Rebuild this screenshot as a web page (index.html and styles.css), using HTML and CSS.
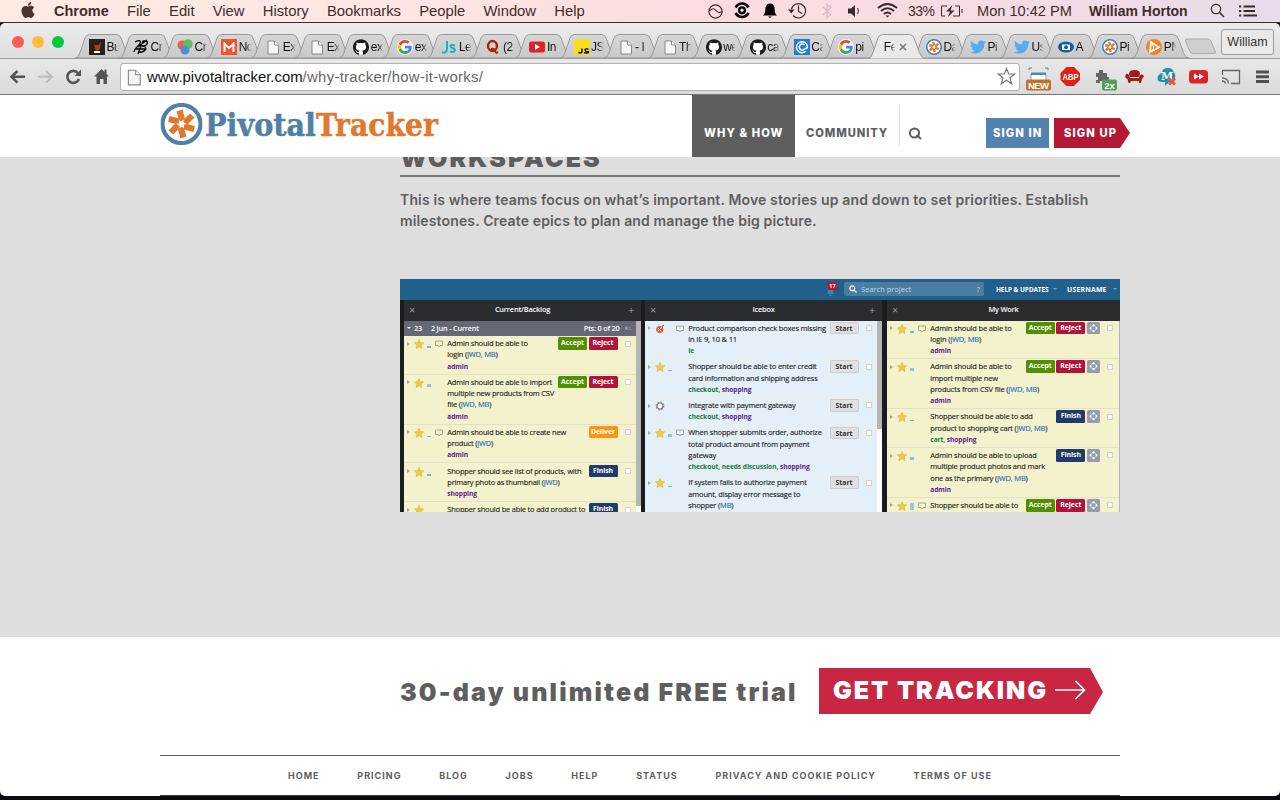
FILE: index.html
```html
<!DOCTYPE html>
<html lang="en">
<head>
<meta charset="utf-8">
<title>How It Works</title>
<link rel="stylesheet" href="styles.css">
</head>
<body>
<svg class="defs" width="0" height="0">
  <defs>
    <linearGradient id="tabfill" x1="0" y1="0" x2="0" y2="1"><stop offset="0" stop-color="#d6d6d6"/><stop offset="1" stop-color="#c9c9c9"/></linearGradient>
    <symbol id="tab" viewBox="0 0 57 25"><path d="M0 24C3 24 3.6 22 5 18.500L10 4Q11.500.5 14.500.5H41.500Q44.500.5 46 4L51.500 18.500C53 22 54 24 57 24Z" fill="url(#tabfill)" stroke="#999"/></symbol>
    <symbol id="tab-on" viewBox="0 0 57 25"><path d="M0 25C3 24 3.600 22 5 18.500L10 4Q11.500.5 14.500.5H41.500Q44.500.5 46 4L51.500 18.500C53 22 54 24 57 25Z" fill="#e9e9e9" stroke="#999"/></symbol>
    <symbol id="page" viewBox="0 0 16 16"><path d="M3 2h6.500l4 4v9H3z" fill="#f7f7f7" stroke="#888"/><path d="M9.500 2v4h4" fill="#fff" stroke="#888"/></symbol>
    <symbol id="github" viewBox="0 0 24 24"><circle cx="12" cy="12" r="11" fill="#fff"/><path fill="#1a1a1a" d="M12 .297c-6.630 0-12 5.373-12 12 0 5.303 3.438 9.800 8.205 11.385.6.113.82-.258.82-.577 0-.285-.01-1.040-.015-2.040-3.338.724-4.042-1.610-4.042-1.610C4.422 18.070 3.633 17.700 3.633 17.700c-1.087-.744.084-.729.084-.729 1.205.084 1.838 1.236 1.838 1.236 1.070 1.835 2.809 1.305 3.495.998.108-.776.417-1.305.76-1.605-2.665-.3-5.466-1.332-5.466-5.930 0-1.310.465-2.380 1.235-3.220-.135-.303-.54-1.523.105-3.176 0 0 1.005-.322 3.300 1.230.96-.267 1.980-.399 3-.405 1.020.006 2.040.138 3 .405 2.280-1.552 3.285-1.230 3.285-1.230.645 1.653.24 2.873.12 3.176.765.840 1.230 1.910 1.230 3.220 0 4.610-2.805 5.625-5.475 5.920.42.36.81 1.096.81 2.220 0 1.606-.015 2.896-.015 3.286 0 .315.21.69.825.57C20.565 22.092 24 17.592 24 12.297c0-6.627-5.373-12-12-12"/></symbol>
    <symbol id="twitter" viewBox="0 0 24 24"><path fill="#55acee" d="M23.954 4.569c-.885.389-1.830.654-2.825.775 1.014-.611 1.794-1.574 2.163-2.723-.951.555-2.005.959-3.127 1.184-.896-.959-2.173-1.559-3.591-1.559-2.717 0-4.920 2.203-4.920 4.917 0 .39.045.765.127 1.124C7.691 8.094 4.066 6.130 1.640 3.161c-.427.722-.666 1.561-.666 2.475 0 1.710.87 3.213 2.188 4.096-.807-.026-1.566-.248-2.228-.616v.061c0 2.385 1.693 4.374 3.946 4.827-.413.111-.849.171-1.296.171-.314 0-.615-.03-.916-.086.631 1.953 2.445 3.377 4.604 3.417-1.680 1.319-3.809 2.105-6.102 2.105-.39 0-.779-.023-1.170-.067 2.189 1.394 4.768 2.209 7.557 2.209 9.054 0 13.999-7.496 13.999-13.986 0-.209 0-.42-.015-.63.961-.689 1.800-1.560 2.460-2.548z"/></symbol>
    <symbol id="google" viewBox="0 0 48 48"><circle cx="24" cy="24" r="24" fill="#fff"/><g transform="translate(3 3) scale(.875)"><path fill="#EA4335" d="M24 9.500c3.540 0 6.710 1.220 9.210 3.600l6.850-6.850C35.900 2.380 30.470 0 24 0 14.620 0 6.510 5.380 2.560 13.220l7.980 6.190C12.430 13.720 17.740 9.500 24 9.500z"/><path fill="#4285F4" d="M46.980 24.550c0-1.570-.15-3.090-.38-4.550H24v9.020h12.940c-.58 2.960-2.260 5.480-4.780 7.180l7.730 6c4.510-4.180 7.090-10.360 7.090-17.650z"/><path fill="#FBBC05" d="M10.530 28.590c-.48-1.450-.76-2.990-.76-4.590s.27-3.140.76-4.590l-7.980-6.190C.92 16.460 0 20.120 0 24s.92 7.540 2.560 10.780z"/><path fill="#34A853" d="M24 48c6.480 0 11.930-2.130 15.890-5.810l-7.730-6c-2.150 1.450-4.920 2.300-8.160 2.300-6.260 0-11.570-4.220-13.470-9.910l-7.980 6.190C6.510 42.620 14.620 48 24 48z"/></g></symbol>
    <symbol id="pivotal" viewBox="-21 -21 42 42"><circle r="19" fill="#fff" stroke="#5280a5" stroke-width="4.200"/><g fill="#e0782d"><g id="pp"><path d="M-5-12.500L1-14.500 3.600-5-.8-2.500-2.800-5Z"/></g><use href="#pp" transform="rotate(60)"/><use href="#pp" transform="rotate(120)"/><use href="#pp" transform="rotate(180)"/><use href="#pp" transform="rotate(240)"/><use href="#pp" transform="rotate(300)"/></g></symbol>
    <symbol id="star" viewBox="0 0 10 10"><path d="M5 .4L6.350 3.600 9.700 3.900 7.150 6.100 7.950 9.500 5 7.700 2.050 9.500 2.850 6.100.3 3.900 3.650 3.600Z" fill="#f3cc3a" stroke="#cba63a" stroke-width=".5"/></symbol>
    <symbol id="bubble" viewBox="0 0 8 8"><path d="M.5 1h7v4.500H5L4 7 3 5.500H.5z" fill="none" stroke="#98987f" stroke-width=".8"/></symbol>
    <symbol id="cross" viewBox="0 0 13 13"><path d="M6.500 2L8.700 4.300H4.300zM6.500 11L8.700 8.700H4.300zM2 6.500L4.300 4.300V8.700zM11 6.500L8.700 4.300V8.700z" fill="#fff"/></symbol>
  </defs>
</svg>

<header class="menubar">
  <svg class="apple" width="14" height="16" viewBox="2 0 20 24"><path fill="#4a342d" d="M12.152 6.896c-.948 0-2.415-1.078-3.960-1.040-2.040.027-3.910 1.183-4.961 3.014-2.117 3.675-.546 9.103 1.519 12.090 1.013 1.454 2.208 3.090 3.792 3.039 1.520-.065 2.090-.987 3.935-.987 1.831 0 2.350.987 3.960.948 1.637-.026 2.676-1.480 3.676-2.948 1.156-1.688 1.636-3.325 1.662-3.415-.039-.013-3.182-1.221-3.220-4.857-.026-3.040 2.480-4.494 2.597-4.559-1.429-2.090-3.623-2.324-4.390-2.376-2-.156-3.675 1.090-4.610 1.090zM15.530 3.830c.843-1.012 1.400-2.427 1.245-3.830-1.207.052-2.662.805-3.532 1.818-.78.896-1.454 2.338-1.273 3.714 1.338.104 2.715-.688 3.559-1.701"/></svg>
  <nav class="menus"><b>Chrome</b><span>File</span><span>Edit</span><span>View</span><span>History</span><span>Bookmarks</span><span>People</span><span>Window</span><span>Help</span></nav>
  <svg class="extras" width="200" height="22" viewBox="700 0 200 22" fill="none" stroke="#3c2a2e" stroke-width="1.200">
    <circle cx="715.500" cy="11.500" r="6.600"/><path d="M709.500 11C712 7.500 714.500 8.500 716.500 11S720.500 12.500 722 11.500"/>
    <g stroke="#000" stroke-width="2.600"><path d="M735.500 7.500Q738 3.500 742 3.500T748.500 7.500M735.500 13Q738 17 742 17T748.500 13"/><circle cx="742" cy="10.300" r="2.900" stroke-width="2.400"/></g>
    <path d="M763 15.500C766 13 765 10 765.500 7.500Q766.500 3.500 770 3.500T774.500 7.500C775 10 774 13 777 15.500ZM768 16.500h4l-2 1.500z" fill="#000" stroke="none"/>
    <path d="M791.500 9A7.200 7.200 0 1 1 793 15.500M798.500 5.500V11.500L802 13.500"/><path d="M788 9.500h6.500l-3.200 4z" fill="#3c2a2e" stroke="none"/>
    <path d="M823 7L831 14.500 827 18V4L831 7.500 823 15" stroke="#d8bcc4"/>
    <path d="M848 8.500h3l4-3.500v12l-4-3.500h-3z" fill="#3c2a2e" stroke="none"/><path d="M857.500 8Q859.500 11 857.500 14" stroke-width="1"/>
    <path d="M878 8Q887.500 0 897 8M881 11Q887.500 5.500 894 11M884 14Q887.500 11 891 14" stroke-width="2"/><path d="M885.500 15.500h4l-2 2z" fill="#3c2a2e" stroke="none"/>
  </svg>
  <span class="pct">33%</span>
  <svg class="batt" width="24" height="14" viewBox="0 0 24 14" fill="none" stroke="#3c2a2e"><path d="M7 2H1.500V12H5M15 2H19.500V12H13"/><path d="M12.500 1L6 7.500H10L8 13 14.500 6.500H10.500Z" fill="#3c2a2e" stroke="none"/><path d="M22 5v4"/></svg>
  <span class="clock">Mon 10:42 PM</span>
  <b class="user">William Horton</b>
  <svg class="spot" width="15" height="15" viewBox="0 0 15 15" fill="none" stroke="#3c2a2e" stroke-width="1.200"><circle cx="6" cy="6" r="4.700"/><path d="M9.500 9.500L14 14" stroke-width="1.600"/></svg>
  <svg class="list" width="19" height="12" viewBox="0 0 19 12" stroke="#3c2a2e" stroke-width="1.800"><path d="M0 1.500h2.200M4.500 1.500H16M0 6h2.200M4.500 6H16M0 10.500h2.200M4.500 10.500H18"/></svg>
</header>

<div class="strip">
  <i class="light red"></i><i class="light amber"></i><i class="light green"></i>
  <div class="tabs">
    <div class="tab"><svg class="shape"><use href="#tab"/></svg><svg class="fav" viewBox="0 0 16 16"><path fill="#26211f" d="M0 0h16v16H0z"/><path d="M5 3l1 3h4l2-4-1 8-3 2-2-2z" fill="#a3421c"/><path d="M5 12h6v2H5z" fill="#fff"/></svg><span>Bu</span></div>
    <div class="tab"><svg class="shape"><use href="#tab"/></svg><svg class="fav" viewBox="0 0 16 16" fill="none" stroke="#000" stroke-width="1.300"><path d="M2 3C8 0 9 3 5 7S1 12 1 13M5 8L14 1M5 15L10 2C17 1 15 7 9 7 16 7 13 14 5 13M3 10H12"/></svg><span>Cr</span></div>
    <div class="tab"><svg class="shape"><use href="#tab"/></svg><svg class="fav" viewBox="0 0 16 16"><circle cx="5" cy="6" r="4.500" fill="#e5623f"/><circle cx="11" cy="5" r="4.800" fill="#64bd5b"/><circle cx="8" cy="11" r="4.500" fill="#4d8fdc"/></svg><span>Cr</span></div>
    <div class="tab"><svg class="shape"><use href="#tab"/></svg><svg class="fav" viewBox="0 0 16 16"><path fill="#f0542d" d="M0 0h16v16H0z"/><path d="M3.500 13V5L8 9l4.500-4v8" fill="none" stroke="#fff" stroke-width="2"/><path d="M3 3l2 2M13 3l-2 2" stroke="#fff"/></svg><span>No</span></div>
    <div class="tab"><svg class="shape"><use href="#tab"/></svg><svg class="fav"><use href="#page"/></svg><span>Ex</span></div>
    <div class="tab"><svg class="shape"><use href="#tab"/></svg><svg class="fav"><use href="#page"/></svg><span>Ex</span></div>
    <div class="tab"><svg class="shape"><use href="#tab"/></svg><svg class="fav"><use href="#github"/></svg><span>ex</span></div>
    <div class="tab"><svg class="shape"><use href="#tab"/></svg><svg class="fav"><use href="#google"/></svg><span>ex</span></div>
    <div class="tab"><svg class="shape"><use href="#tab"/></svg><svg class="fav" viewBox="0 0 16 16" fill="none" stroke="#12b5cb" stroke-width="2"><path d="M6 2V10Q6 14 1 13.500M14 6.500Q9 5 9.500 7.500C10 9.500 14 8.500 14 11.500Q13 14 9 12.500"/></svg><span>Le</span></div>
    <div class="tab"><svg class="shape"><use href="#tab"/></svg><svg class="fav" viewBox="0 0 16 16" fill="none" stroke="#a82400"><ellipse cx="7.500" cy="7" rx="4.500" ry="5" stroke-width="2.400"/><path d="M6 10Q9 9 10 12T13 13" stroke-width="2"/></svg><span>(2</span></div>
    <div class="tab"><svg class="shape"><use href="#tab"/></svg><svg class="fav" viewBox="0 0 16 16"><rect y="2.500" width="16" height="11" rx="2.500" fill="#d8242a"/><path d="M6 5l5 3-5 3z" fill="#fff"/></svg><span>In</span></div>
    <div class="tab"><svg class="shape"><use href="#tab"/></svg><svg class="fav" viewBox="0 0 16 16"><path fill="#f7df1e" d="M0 0h16v16H0z"/><path d="M8 9.500V13Q7.500 14.500 4.500 13.500M14.500 10.200Q10.800 9.200 11 11T14.500 12.800Q14 14.800 10 13.700" fill="none" stroke="#000" stroke-width="1.400"/></svg><span>JS</span></div>
    <div class="tab"><svg class="shape"><use href="#tab"/></svg><svg class="fav"><use href="#page"/></svg><span>- I</span></div>
    <div class="tab"><svg class="shape"><use href="#tab"/></svg><svg class="fav"><use href="#page"/></svg><span>Th</span></div>
    <div class="tab"><svg class="shape"><use href="#tab"/></svg><svg class="fav"><use href="#github"/></svg><span>we</span></div>
    <div class="tab"><svg class="shape"><use href="#tab"/></svg><svg class="fav"><use href="#github"/></svg><span>ca</span></div>
    <div class="tab"><svg class="shape"><use href="#tab"/></svg><svg class="fav" viewBox="0 0 16 16" fill="none" stroke="#fff"><path fill="#1b7fd6" stroke="none" d="M0 0h16v16H0z"/><path d="M12 12A5.500 5.500 0 1 1 13.500 8Q13 10 10.500 9.500M10.500 6A3 3 0 1 0 10.500 10" stroke-width="1.500"/></svg><span>Ca</span></div>
    <div class="tab"><svg class="shape"><use href="#tab"/></svg><svg class="fav"><use href="#google"/></svg><span>pi</span></div>
    <div class="tab on"><svg class="shape"><use href="#tab-on"/></svg><span>Fe</span><svg class="close" width="8" height="8" viewBox="0 0 8 8"><path d="M1 1l6 6M7 1L1 7" stroke="#777" stroke-width="1.500"/></svg></div>
    <div class="tab"><svg class="shape"><use href="#tab"/></svg><svg class="fav"><use href="#pivotal"/></svg><span>Da</span></div>
    <div class="tab"><svg class="shape"><use href="#tab"/></svg><svg class="fav"><use href="#twitter"/></svg><span>Pi</span></div>
    <div class="tab"><svg class="shape"><use href="#tab"/></svg><svg class="fav"><use href="#twitter"/></svg><span>Us</span></div>
    <div class="tab"><svg class="shape"><use href="#tab"/></svg><svg class="fav" viewBox="0 0 16 16"><ellipse cx="8" cy="8" rx="8" ry="5.500" fill="#155f9e"/><path d="M4 5.500h8v5.500H4z" fill="#fff"/><circle cx="8" cy="8.200" r="2" fill="#155f9e"/></svg><span>A</span></div>
    <div class="tab"><svg class="shape"><use href="#tab"/></svg><svg class="fav"><use href="#pivotal"/></svg><span>Pi</span></div>
    <div class="tab"><svg class="shape"><use href="#tab"/></svg><svg class="fav" viewBox="0 0 16 16"><circle cx="8" cy="8" r="8" fill="#f58220"/><path d="M5 3L13 8.500 4 13Z" fill="none" stroke="#fff" stroke-width="1.800"/><path d="M5 3L8 9L4 13" fill="none" stroke="#fff"/></svg><span>PN</span></div>
  </div>
  <svg class="newtab" width="34" height="17" viewBox="0 0 34 17"><path d="M3 1H24Q26 1 27 3L31.500 14Q32 15.500 30 15.500H9Q7 15.500 6 13.500L1.500 3Q1 1 3 1Z" fill="#d0d0d0" stroke="#aaa"/></svg>
  <button class="profile">William</button>
</div>

<div class="toolbar">
  <svg class="nav" width="104" height="20" viewBox="8 67 104 20" fill="none" stroke="#555" stroke-width="2.600">
    <path d="M25 76.800H12M17.500 71L11.500 76.800 17.500 82.600"/><path d="M38 76.800H51M46 71L52 76.800 46 82.600" stroke="#bdbdbd" stroke-width="2"/>
    <path d="M78 73A6 6 0 1 0 79 79"/><path d="M81 69.500V76H74.500z" fill="#555" stroke="none"/>
    <path d="M101.500 69L94 76.500H96.500V84H100V79H103.500V84H107V76.500H109L106.500 74V69.500H104.500V72z" fill="#555" stroke="none"/>
  </svg>
  <div class="omni">
    <svg width="18" height="18" viewBox="0 0 16 16"><use href="#page"/></svg>
    <span class="url">www.pivotaltracker.com<em>/why-tracker/how-it-works/</em></span>
    <svg class="fave" width="19" height="19" viewBox="0 0 19 19"><path d="M9.500 1.500L11.700 7H17.700L13 10.700 14.700 16.800 9.500 13.300 4.300 16.800 6 10.700 1.300 7H7.300Z" fill="#fff" stroke="#777" stroke-width="1.200"/></svg>
  </div>
  <svg class="exts" width="250" height="30" viewBox="1024 64 250 30">
    <path d="M1031 74h15v8h-15z" fill="#fff" stroke="#8aa7bd"/><path d="M1031 72.500h15v2.500h-15z" fill="#4d8ab8"/><path d="M1029 70v-2h3M1045 68h3v2" fill="none" stroke="#4d8ab8"/>
    <rect x="1026" y="79.500" width="25" height="11" rx="2" fill="#c0712b"/><text x="1038.500" y="88.700" class="ext-txt" font-size="9.500" textLength="21">NEW</text>
    <path d="M1066.500 67h7.500l6 6v7l-6 6h-7.500l-6-6v-7z" fill="#e01f16"/><text x="1070.500" y="80.300" class="ext-txt" font-size="9.500" textLength="16" lengthAdjust="spacingAndGlyphs">ABP</text>
    <path d="M1096 73h3v-3h4v3h4v4h2v3h-2v3h-4v-2h-3v2h-4v-3h2v-3h-2z" fill="#666"/><rect x="1102" y="79.500" width="15" height="11" rx="2" fill="#4f9f55"/><text x="1109.500" y="88.700" class="ext-txt" font-size="9.500">2x</text>
    <path d="M1129 74Q1129 70 1134.500 70T1140 74L1139 77H1130zM1126 74Q1129 73 1130 78H1139Q1140 73 1143.500 75 1144.500 77 1142 79L1141 83H1139V81H1130.500V83H1128.500L1127.500 79Q1124 78 1126 74Z" fill="#a01c16"/>
    <path d="M1161 82Q1156 81 1158 76 1160 73 1162 73 1162 68 1168 68 1173 68 1173.500 72 1176 74 1175 78 1174 82 1169 82L1165 86V82Z" fill="#2391ac"/><text x="1167" y="80" class="ext-txt" font-size="11" font-family="DejaVu Serif">M</text><path d="M1169 78.500l6 6M1175 78.500l-6 6" stroke="#f04e3e" stroke-width="2.500"/>
    <rect x="1189" y="70" width="19" height="13.500" rx="3.500" fill="#d92325"/><path d="M1194 73.500l5 3-5 3zM1199 73.500l5 3-5 3z" fill="#fff"/>
    <path d="M1222.500 75V70.500H1239.500V83.500H1231M1222 78Q1228 78 1228.500 83.500M1222 81Q1225 81 1225.500 83.500" fill="none" stroke="#666" stroke-width="1.300"/>
    <path d="M1256 72H1269M1256 76.800H1269M1256 81.500H1269" stroke="#505050" stroke-width="3"/>
  </svg>
</div>

<div class="site">
  <div class="topnav">
    <svg class="logo" width="280" height="46" viewBox="160 101 280 46">
      <use href="#pivotal" x="160.500" y="103" width="42" height="42"/>
      <text x="205" y="135.500" class="wordmark blue" textLength="111" lengthAdjust="spacingAndGlyphs">Pivotal</text>
      <text x="316" y="135.500" class="wordmark orange" textLength="122" lengthAdjust="spacingAndGlyphs">Tracker</text>
    </svg>
    <nav class="links">
      <a class="why">WHY &amp; HOW</a><a class="community">COMMUNITY</a>
      <span class="search"><svg width="14" height="14" viewBox="0 0 14 14" fill="none" stroke="#5e5e5e" stroke-width="2"><circle cx="5.500" cy="6" r="4.600"/><path d="M7.500 8L12 12"/></svg></span>
    </nav>
    <a class="signin">SIGN IN</a><a class="signup">SIGN UP</a>
  </div>

  <section class="workspaces">
    <h2>WORKSPACES</h2>
    <p>This is where teams focus on what’s important. Move stories up and down to set priorities. Establish<br>milestones. Create epics to plan and manage the big picture.</p>
    <div class="app">
      <div class="appbar">
        <span class="bell"><svg width="9" height="9" viewBox="0 0 9 9"><path d="M1 7Q2 6 2 4 2 1 4.500 1T7 4Q7 6 8 7ZM3.500 7.500h2V9h-2z" fill="#4384b1"/></svg><b>17</b></span>
        <span class="find"><svg width="8" height="8" viewBox="0 0 8 8" fill="none" stroke="#fff" stroke-width="1.300"><circle cx="3.300" cy="3.300" r="2.400"/><path d="M5 5l2.500 2.500"/></svg>Search project<i>?</i></span>
        <b class="help">HELP &amp; UPDATES</b><i class="caret"></i><b class="uname">USERNAME</b><i class="caret"></i>
      </div>
      <div class="panels">
        <div class="panel first">
          <div class="phead"><i>×</i><b>Current/Backlog</b><i class="plus">+</i></div>
          <div class="iter"><i class="down"></i><span>23</span><span class="date">2 Jun - Current</span><span class="pts">Pts: 0 of 20</span><i class="tri">▾≡</i></div>
          <div class="body yellow">
            <div class="story"><div class="ic"><i class="arr"></i><svg class="st"><use href="#star"/></svg><i class="est two"></i><svg class="bub"><use href="#bubble"/></svg></div><div class="txt">Admin should be able to<br>login (<a>JWD, MB</a>)<br><b>admin</b></div><div class="act"><b class="accept">Accept</b><b class="reject">Reject</b><i class="box"></i></div></div>
            <div class="story"><div class="ic"><i class="arr"></i><svg class="st"><use href="#star"/></svg><i class="est three"></i></div><div class="txt">Admin should be able to import<br>multiple new products from CSV<br>file (<a>JWD, MB</a>)<br><b>admin</b></div><div class="act"><b class="accept">Accept</b><b class="reject">Reject</b><i class="box"></i></div></div>
            <div class="story"><div class="ic"><i class="arr"></i><svg class="st"><use href="#star"/></svg><i class="est one"></i><svg class="bub"><use href="#bubble"/></svg></div><div class="txt">Admin should be able to create new<br>product (<a>JWD</a>)<br><b>admin</b></div><div class="act"><b class="deliver">Deliver</b><i class="box"></i></div></div>
            <div class="story"><div class="ic"><i class="arr"></i><svg class="st"><use href="#star"/></svg><i class="est two"></i></div><div class="txt">Shopper should see list of products, with<br>primary photo as thumbnail (<a>JWD</a>)<br><b>shopping</b></div><div class="act"><b class="finish">Finish</b><i class="box"></i></div></div>
            <div class="story"><div class="ic"><i class="arr"></i><svg class="st"><use href="#star"/></svg></div><div class="txt">Shopper should be able to add product to</div><div class="act"><b class="finish">Finish</b><i class="box"></i></div></div>
          </div>
          <i class="bar b1"></i>
        </div>
        <div class="panel second">
          <div class="phead"><i>×</i><b>Icebox</b><i class="plus">+</i></div>
          <div class="body ice">
            <div class="story"><div class="ic"><i class="arr"></i><svg class="st" viewBox="0 0 10 10"><circle cx="4.800" cy="5.500" r="3.600" fill="#df5a35"/><path d="M2.500 7.500L8.500 1.500M3 4l3.500 3.500" stroke="#fff" stroke-width=".7"/><path d="M7 2.500L9 1" stroke="#a33" stroke-width="1"/></svg><svg class="bub"><use href="#bubble"/></svg></div><div class="txt">Product comparison check boxes missing<br>in IE 9, 10 &amp; 11<br><b class="g">ie</b></div><div class="act"><b class="start">Start</b><i class="box"></i></div></div>
            <div class="story"><div class="ic"><i class="arr"></i><svg class="st"><use href="#star"/></svg><i class="est one"></i></div><div class="txt">Shopper should be able to enter credit<br>card information and shipping address<br><b class="g">checkout, </b><b>shopping</b></div><div class="act"><b class="start">Start</b><i class="box"></i></div></div>
            <div class="story"><div class="ic"><i class="arr"></i><svg class="st" viewBox="0 0 10 10"><circle cx="5" cy="5" r="3" fill="#fff" stroke="#777" stroke-width="1.200"/><circle cx="5" cy="5" r="4" fill="none" stroke="#777" stroke-width="1" stroke-dasharray="1.570 1.570"/></svg></div><div class="txt">Integrate with payment gateway<br><b class="g">checkout, </b><b>shopping</b></div><div class="act"><b class="start">Start</b><i class="box"></i></div></div>
            <div class="story"><div class="ic"><i class="arr"></i><svg class="st"><use href="#star"/></svg><i class="est three"></i><svg class="bub"><use href="#bubble"/></svg></div><div class="txt">When shopper submits order, authorize<br>total product amount from payment<br>gateway<br><b class="g">checkout, needs discussion, </b><b>shopping</b></div><div class="act"><b class="start">Start</b><i class="box"></i></div></div>
            <div class="story"><div class="ic"><i class="arr"></i><svg class="st"><use href="#star"/></svg><i class="est one"></i></div><div class="txt">If system fails to authorize payment<br>amount, display error message to<br>shopper (<a>MB</a>)<br>&nbsp;</div><div class="act"><b class="start">Start</b><i class="box"></i></div></div>
          </div>
          <i class="bar b2"></i>
        </div>
        <div class="panel third">
          <div class="phead"><i>×</i><b>My Work</b><i class="plus"></i></div>
          <div class="body yellow">
            <div class="story"><div class="ic"><i class="arr"></i><svg class="st"><use href="#star"/></svg><i class="est two"></i><svg class="bub"><use href="#bubble"/></svg></div><div class="txt">Admin should be able to<br>login (<a>JWD, MB</a>)<br><b>admin</b></div><div class="act"><b class="accept">Accept</b><b class="reject">Reject</b><svg class="mv"><use href="#cross"/></svg><i class="box"></i></div></div>
            <div class="story"><div class="ic"><i class="arr"></i><svg class="st"><use href="#star"/></svg><i class="est three"></i></div><div class="txt">Admin should be able to<br>import multiple new<br>products from CSV file (<a>JWD, MB</a>)<br><b>admin</b></div><div class="act"><b class="accept">Accept</b><b class="reject">Reject</b><svg class="mv"><use href="#cross"/></svg><i class="box"></i></div></div>
            <div class="story"><div class="ic"><i class="arr"></i><svg class="st"><use href="#star"/></svg><i class="est one"></i></div><div class="txt">Shopper should be able to add<br>product to shopping cart (<a>JWD, MB</a>)<br><b class="g">cart, </b><b>shopping</b></div><div class="act"><b class="finish">Finish</b><svg class="mv"><use href="#cross"/></svg><i class="box"></i></div></div>
            <div class="story"><div class="ic"><i class="arr"></i><svg class="st"><use href="#star"/></svg><i class="est three"></i></div><div class="txt">Admin should be able to upload<br>multiple product photos and mark<br>one as the primary (<a>JWD, MB</a>)<br><b>admin</b></div><div class="act"><b class="finish">Finish</b><svg class="mv"><use href="#cross"/></svg><i class="box"></i></div></div>
            <div class="story"><div class="ic"><i class="arr"></i><svg class="st"><use href="#star"/></svg><i class="est four"></i><svg class="bub"><use href="#bubble"/></svg></div><div class="txt">Shopper should be able to<br>&nbsp;</div><div class="act"><b class="accept">Accept</b><b class="reject">Reject</b><svg class="mv"><use href="#cross"/></svg><i class="box"></i></div></div>
          </div>
          <i class="bar b3"></i>
        </div>
      </div>
    </div>
  </section>

  <section class="trial">
    <strong>30-day unlimited FREE trial</strong>
    <a class="cta"><span>GET TRACKING</span><svg width="31" height="20" viewBox="0 0 31 20" fill="none" stroke="#fff" stroke-width="1.700"><path d="M0 10H29M20.500 1L29.500 10 20.500 19"/></svg></a>
  </section>
  <footer class="foot"><a>HOME</a><a>PRICING</a><a>BLOG</a><a>JOBS</a><a>HELP</a><a>STATUS</a><a>PRIVACY AND COOKIE POLICY</a><a>TERMS OF USE</a></footer>
</div>
</body>
</html>
```
FILE: styles.css
```css
* { box-sizing: border-box; }
body { margin: 0; width: 1280px; height: 800px; overflow: hidden; background: #0b0b10; font-family: "Liberation Sans", Arial, sans-serif; display: flex; flex-direction: column; }
i, em { font-style: normal; }
svg { display: block; flex: none; overflow: visible; }
.defs { position: absolute; }

/* system menu bar */
.menubar { height: 23px; flex: none; display: flex; align-items: center; padding: 0 0 1px 21px; background: linear-gradient(90deg, #fdebe2, #ffe6e6 30%, #fbdbdf 55%, #f8dce2 72%, #e8dcea); border-bottom: 1px solid #3d2c2c; color: #3f2d2c; font-size: 14.800px; white-space: nowrap; }
.apple { margin-top: -2px; }
.menus { display: flex; gap: 18.200px; margin-left: 19px; width: 646px; }
.menus b { font-size: 14.500px; }
.pct { font-size: 14px; width: 32px; margin-left: 8px; letter-spacing: -.5px; }
.clock { margin-left: 13px; width: 112px; font-size: 14.600px; }
.user { font-size: 14px; width: 121px; }
.list { margin-left: 14px; }

/* tab strip */
.strip { height: 36px; flex: none; display: flex; background: linear-gradient(#ececec, #dedede); border-bottom: 1px solid #9b9b9b; border-radius: 5px 5px 0 0; padding-left: 12px; }
.light { width: 12px; height: 12px; border-radius: 50%; margin: 13px 8px 0 0; }
.red { background: #fc5b57; }
.amber { background: #fdbc40; }
.green { background: #05c83f; }
.tabs { display: flex; width: 1113px; margin: 11px 0 -1px 3px; }
.tab { width: 44.050px; flex: none; position: relative; display: flex; align-items: flex-start; padding: 5px 0 0 14px; font-size: 12px; letter-spacing: -.500px; color: #111; }
.tab .shape { position: absolute; left: 0; top: 0; width: 57px; height: 25px; }
.tab .fav { position: relative; width: 16px; height: 16px; }
.tab span { position: relative; flex: none; width: 15px; margin-left: 1.500px; overflow: hidden; line-height: 16px; white-space: nowrap; -webkit-mask: linear-gradient(90deg, #000 50%, transparent 85%); }
.tab.on { z-index: 2; padding-left: 16px; }
.tab.on span { width: 15px; margin-left: 0; -webkit-mask: linear-gradient(90deg, #000 45%, transparent 75%); }
.close { position: relative; margin: 4px 0 0; }
.newtab { margin: 15px 0 0 -4px; }
.profile { font: 12.500px "Liberation Sans", sans-serif; width: 53px; height: 26px; margin: 6px 0 0 3px; padding: 0; color: #333; border: 1px solid #9d9d9d; border-radius: 3px; background: #e9e9e9; }

/* toolbar */
.toolbar { height: 36px; flex: none; display: flex; align-items: center; padding-left: 8px; background: linear-gradient(#e8e8e8, #dadada); border-bottom: 1px solid #777; }
.omni { display: flex; align-items: center; width: 900px; height: 28px; margin-left: 8px; padding: 0 3px 0 4px; background: #fff; border: 1px solid #b1b1b1; border-radius: 3px; }
.url { margin-left: 4px; font-size: 14.900px; color: #111; }
.url em { color: #666; letter-spacing: .3px; }
.fave { margin-left: auto; }
.exts { margin: 4px 0 0 4px; }
.ext-txt { fill: #fff; font-weight: bold; text-anchor: middle; }

/* site */
.site { flex: 1; background: #fff; border-radius: 0 0 5px 5px; margin-bottom: 4px; display: flex; flex-direction: column; font-family: Inter, "Liberation Sans", sans-serif; color: #5e5e5e; }
.topnav { height: 62px; flex: none; display: flex; padding-left: 160px; background: #fff; position: relative; z-index: 1; }
.logo { margin-top: 6px; }
.wordmark { font: bold 31.500px "DejaVu Serif", serif; stroke-width: .5px; }
.blue { fill: #5280a5; stroke: #5280a5; }
.orange { fill: #e0782d; stroke: #e0782d; }
.links { display: flex; margin-left: 252px; font-size: 11.200px; font-weight: 800; letter-spacing: 1.100px; }
.links a, .search { height: 62px; padding-top: 31px; white-space: nowrap; }
.why { width: 103px; background: #5e5e5e; color: #fff; padding-left: 12px; }
.community { width: 104px; padding-left: 11px; letter-spacing: .900px; }
.search { position: relative; padding: 32px 0 0 10px; width: 87px; }
.search::before { content: ""; position: absolute; left: 0; top: 10px; width: 1px; height: 41px; background: #ddd; }
.signin, .signup { height: 30px; margin-top: 23px; line-height: 30px; font-size: 11.200px; font-weight: 800; letter-spacing: 1.100px; color: #fff; white-space: nowrap; }
.signin { width: 63px; background: #5282b0; padding-left: 7px; }
.signup { width: 76px; margin-left: 5px; padding-left: 10px; background: #b51834; clip-path: polygon(0 0, 66px 0, 100% 50%, 66px 100%, 0 100%); }
.workspaces { height: 480px; flex: none; background: #dedede; padding-left: 400px; }
h2 { width: 720px; height: 30px; margin: -10px 0 0; border-bottom: 2px solid #777975; font-size: 25px; line-height: 22px; font-weight: 900; letter-spacing: 2.100px; }
.workspaces p { margin: 12px 0 0; font-size: 14px; line-height: 21px; font-weight: 600; letter-spacing: .140px; white-space: nowrap; }

/* product preview */
.app { width: 720px; height: 233px; margin-top: 48px; overflow: hidden; background: #1b1c1e; font: 7.500px/11.300px "Open Sans", sans-serif; letter-spacing: -.200px; color: #333; }
.appbar { height: 20.500px; display: flex; align-items: center; background: #22608c; color: #fff; padding-left: 426px; letter-spacing: 0; }
.bell { display: flex; position: relative; width: 18px; padding-top: 4px; }
.bell b { position: absolute; left: 2px; top: -1px; width: 9px; height: 8px; background: #c8102e; font-size: 5.500px; line-height: 8px; text-align: center; }
.find { width: 140px; height: 14px; display: flex; align-items: center; padding: 0 4px 0 5px; background: #4a7da3; border-radius: 2px; color: #c3d5e2; }
.find svg { margin-right: 4px; }
.find i { margin-left: auto; }
.help { margin-left: 12px; width: 54px; font-size: 6.500px; letter-spacing: -.1px; white-space: nowrap; }
.uname { margin-left: 10px; width: 43px; font-size: 6.800px; letter-spacing: .250px; }
.caret { margin-left: 3px; border: 2px solid transparent; border-top-color: #7ba5c4; border-bottom: 0; }
.panels { display: flex; height: 212.500px; }
.panel { height: 212.500px; position: relative; flex: none; }
.first { width: 241px; padding-left: 4px; }
.second { width: 242px; padding-left: 4px; }
.third { width: 237px; padding-left: 4px; }
.phead { height: 21px; display: flex; align-items: center; justify-content: space-between; padding: 0 5px; background: #2b2c2f; color: #fff; font-size: 7.400px; }
.first .phead, .second .phead { width: 237px; }
.phead b { font-weight: 600; }
.phead i { color: #999; font-size: 11px; width: 8px; }
.iter { height: 15.500px; width: 232px; display: flex; align-items: center; padding: 0 5px 0 3px; background: #646975; color: #fff; font-size: 7.300px; font-weight: 600; }
.down { border: 2.500px solid transparent; border-top-color: #fff; border-bottom: 0; margin-right: 3px; }
.date { margin-left: 9px; }
.pts { margin-left: auto; }
.tri { font-size: 5px; margin-left: 6px; color: #aab; }
.body { width: 231.500px; height: 192px; overflow: hidden; }
.yellow { background: #f4f2cc; }
.ice { background: #e4eff7; }
.story { display: flex; padding: 2.200px 0 1.600px; border-bottom: 1px solid #e2e1c8; position: relative; }
.ice .story { border-color: #f0ede8; }
.ic { width: 43.300px; flex: none; position: relative; height: 11px; }
.arr { position: absolute; left: 3px; top: 3.500px; border: 2.200px solid transparent; border-left: 3px solid #a9a99a; border-right: 0; }
.st { position: absolute; left: 10px; top: 1px; width: 10px; height: 10px; }
.est { position: absolute; left: 23px; bottom: 1px; width: 4px; height: 1px; background: #7fb4d4; }
.two { height: 2px; }
.three { height: 3px; opacity: .8; }
.four { height: 7px; opacity: .7; }
.bub { position: absolute; left: 31px; top: 2px; width: 8px; height: 8px; }
.txt { flex: 1; min-width: 0; white-space: nowrap; color: #262626; -webkit-text-stroke: .150px; }
.txt a { color: #2770b8; }
.txt b { color: #5a2391; font-size: 6.600px; letter-spacing: -.050px; -webkit-text-stroke: 0; }
.txt .g { color: #1b7a3c; }
.ice .txt, .third .txt { letter-spacing: -.170px; }
.act { position: absolute; right: 4.500px; top: 1.300px; display: flex; gap: 1.500px; align-items: center; }
.third .act { right: 5.200px; }
.act b { width: 29px; height: 12.500px; border-radius: 1.500px; line-height: 12px; text-align: center; color: #fff; font-size: 6.900px; letter-spacing: -.050px; }
.accept { background: #519000; }
.reject { background: #b3123a; }
.deliver { background: #ff9410; }
.finish { background: #213a68; }
.act .start { background: #dfe0e3; color: #333; border: .5px solid #ccc; }
.mv { width: 13px; height: 12.500px; background: #959daa; border-radius: 1.500px; }
.box { width: 6px; height: 6px; margin-left: 6px; background: #fff; border: 1px solid #d4d4cb; }
.bar { position: absolute; top: 21px; background: #b5b5b5; width: 5.500px; }
.b1 { left: 235.500px; height: 185px; box-shadow: 0 8px 0 #fff; }
.b2 { left: 235.500px; height: 108px; box-shadow: 0 84px 0 #fff; }
.b3 { left: 235.500px; height: 192px; width: 2px; }

/* call to action and footer */
.trial { height: 118px; flex: none; display: flex; padding: 31px 0 0 400px; }
.trial strong { width: 419px; font-size: 25px; line-height: 48px; font-weight: 900; letter-spacing: 2.150px; white-space: nowrap; }
.cta { width: 284px; height: 46px; display: flex; align-items: center; justify-content: space-between; padding: 0 17px 2px 14px; background: #c92643; clip-path: polygon(0 0, 271px 0, 100% 52%, 271px 100%, 0 100%); color: #fff; font-size: 25px; font-weight: 900; letter-spacing: 1.920px; white-space: nowrap; }
.foot { width: 960px; height: 41px; flex: none; margin-left: 160px; display: flex; justify-content: space-between; align-items: center; padding: 0 128px 0 128px; border-top: 1px solid #5e5e5e; border-bottom: 1px solid #39413e; font-size: 9px; font-weight: 700; letter-spacing: 1.020px; white-space: nowrap; }
```
